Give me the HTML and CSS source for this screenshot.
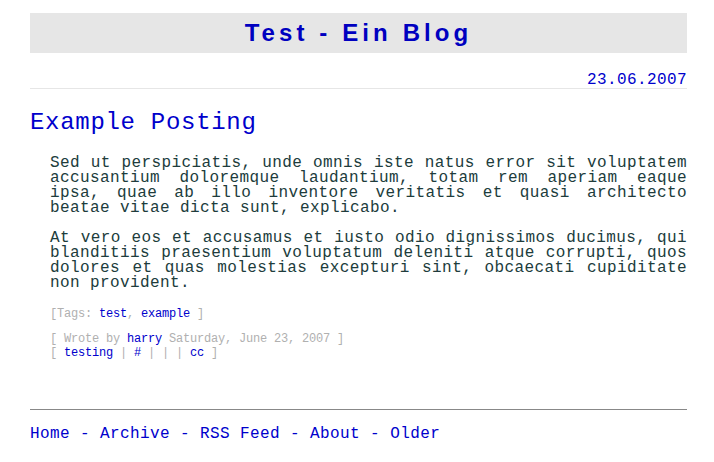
FILE: index.html
```html
<!DOCTYPE html>
<html>
<head>
<meta charset="utf-8">
<title>Test - Ein Blog</title>
<link rel="stylesheet" href="styles.css">
</head>
<body>
<div class="page">
  <div class="header"><a class="blog-title" href="#">Test - Ein Blog</a></div>
  <div class="date">23.06.2007</div>
  <div class="post">
    <h2 class="post-title"><a href="#">Example Posting</a></h2>
    <div class="post-body">
      <p>Sed ut perspiciatis, unde omnis iste natus error sit voluptatem accusantium doloremque laudantium, totam rem aperiam eaque ipsa, quae ab illo inventore veritatis et quasi architecto beatae vitae dicta sunt, explicabo.</p>
      <p>At vero eos et accusamus et iusto odio dignissimos ducimus, qui blanditiis praesentium voluptatum deleniti atque corrupti, quos dolores et quas molestias excepturi sint, obcaecati cupiditate non provident.</p>
    </div>
    <div class="tags">[Tags: <a href="#">test</a>, <a href="#">example</a> ]</div>
    <div class="meta">[ Wrote by <a href="#">harry</a> Saturday, June 23, 2007 ]<br>[ <a href="#">testing</a> | <a href="#">#</a> | | | <a href="#">cc</a> ]</div>
  </div>
  <div class="footer">
    <a href="#">Home</a> - <a href="#">Archive</a> - <a href="#">RSS Feed</a> - <a href="#">About</a> - <a href="#">Older</a>
  </div>
</div>
</body>
</html>
```
FILE: styles.css
```css
html, body {
  margin: 0;
  padding: 0;
  background: #ffffff;
}
body {
  font-family: "Liberation Mono", "Courier New", monospace;
  color: #203c3c;
}
a {
  color: #0000cc;
  text-decoration: none;
}
.page {
  padding: 13px 27px 0 30px;
}
.header {
  background: #e6e6e6;
  height: 40px;
  line-height: 40px;
  text-align: center;
}
.blog-title {
  font-family: "Liberation Sans", Arial, sans-serif;
  font-weight: bold;
  font-size: 24px;
  letter-spacing: 4.1px;
  color: #0000c0;
}
.date {
  margin-top: 19px;
  font-size: 16px;
  line-height: 16px;
  letter-spacing: 0.4px;
  text-align: right;
  color: #0000cc;
  border-bottom: 1px solid #e6e6e6;
}
.post-title {
  margin: 20px 0 0 0;
  font-size: 24px;
  line-height: 28px;
  letter-spacing: 0.7px;
  font-weight: normal;
}
.post-body {
  margin: 19px 0 0 20px;
}
.post-body p {
  margin: 0 0 15px 0;
  font-size: 16px;
  line-height: 15px;
  letter-spacing: 0.4px;
  text-align: justify;
}
.post-body p:last-child {
  margin-bottom: 0;
}
.tags, .meta {
  margin-left: 20px;
  font-size: 12px;
  line-height: 14px;
  letter-spacing: -0.2px;
  color: #b0b0b0;
}
.tags {
  margin-top: 16px;
}
.meta {
  margin-top: 11px;
}
.footer {
  margin-top: 49px;
  border-top: 1px solid #888888;
  padding-top: 16px;
  font-size: 16px;
  line-height: 16px;
  letter-spacing: 0.4px;
  color: #0000cc;
}
```
